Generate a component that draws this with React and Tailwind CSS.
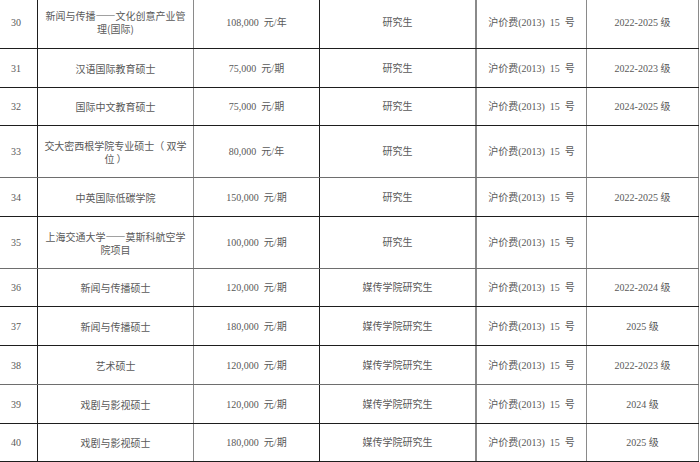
const rows = [
  { no: "30", name: "新闻与传播——文化创意产业管理(国际)", fee: "108,000", unit: "元/年", type: "研究生", grade: "2022-2025 级", h: "h-[53px]", line: "border-[#1e1e1e]" },
  { no: "31", name: "汉语国际教育硕士", fee: "75,000", unit: "元/期", type: "研究生", grade: "2022-2023 级", h: "h-[39px]", line: "border-[#1e1e1e]" },
  { no: "32", name: "国际中文教育硕士", fee: "75,000", unit: "元/期", type: "研究生", grade: "2024-2025 级", h: "h-[38px]", line: "border-[#1e1e1e]" },
  { no: "33", name: "交大密西根学院专业硕士（ 双学位 ）", fee: "80,000", unit: "元/年", type: "研究生", grade: "", h: "h-[52px]", line: "border-[#6e6e6e]" },
  { no: "34", name: "中英国际低碳学院", fee: "150,000", unit: "元/期", type: "研究生", grade: "2022-2025 级", h: "h-[39px]", line: "border-[#1e1e1e]" },
  { no: "35", name: "上海交通大学——莫斯科航空学院项目", fee: "100,000", unit: "元/期", type: "研究生", grade: "", h: "h-[52px]", line: "border-[#6e6e6e]" },
  { no: "36", name: "新闻与传播硕士", fee: "120,000", unit: "元/期", type: "媒传学院研究生", grade: "2022-2024 级", h: "h-[38px]", line: "border-[#1e1e1e]" },
  { no: "37", name: "新闻与传播硕士", fee: "180,000", unit: "元/期", type: "媒传学院研究生", grade: "2025 级", h: "h-[39px]", line: "border-[#1e1e1e]" },
  { no: "38", name: "艺术硕士", fee: "120,000", unit: "元/期", type: "媒传学院研究生", grade: "2022-2023 级", h: "h-[39px]", line: "border-[#6e6e6e]" },
  { no: "39", name: "戏剧与影视硕士", fee: "120,000", unit: "元/期", type: "媒传学院研究生", grade: "2024 级", h: "h-[39px]", line: "border-[#1e1e1e]" },
  { no: "40", name: "戏剧与影视硕士", fee: "180,000", unit: "元/期", type: "媒传学院研究生", grade: "2025 级", h: "h-[38px]", line: "border-[#1e1e1e]" },
];

export default function App() {
  return (
    <div
      className="w-[700px] h-[462px] overflow-hidden bg-white text-[10px] leading-[13px] text-[#595959]"
      style={{ fontFamily: '"Liberation Serif", "Noto Sans CJK SC", serif' }}
    >
      <div className="-mt-[4px] w-[699px]">
        {rows.map((r) => (
          <div
            key={r.no}
            className={`grid grid-cols-[38px_156px_126px_157px_110px_112px] border-b ${r.line} ${r.h}`}
          >
            <div className="flex items-center pl-[11px] border-r border-[#1e1e1e]">{r.no}</div>
            <div
              lang="zh-CN"
              className="flex items-center justify-center px-[4px] text-center border-r border-[#8a8a8a] whitespace-pre-wrap"
              style={{ fontFamily: '"Noto Sans CJK SC", "Liberation Serif", sans-serif' }}
            >
              {r.name}
            </div>
            <div className="flex items-center justify-center border-r border-[#1e1e1e] whitespace-pre">
              {r.fee + "  " + r.unit}
            </div>
            <div className="flex items-center justify-center border-r-2 border-[#8a8a8a]">{r.type}</div>
            <div className="flex items-center justify-center border-r-[1.5px] border-[#8a8a8a] whitespace-pre">
              {"沪价费(2013)  15  号"}
            </div>
            <div className="flex items-center justify-center border-r-[1.5px] border-[#8a8a8a]">{r.grade}</div>
          </div>
        ))}
      </div>
    </div>
  );
}
